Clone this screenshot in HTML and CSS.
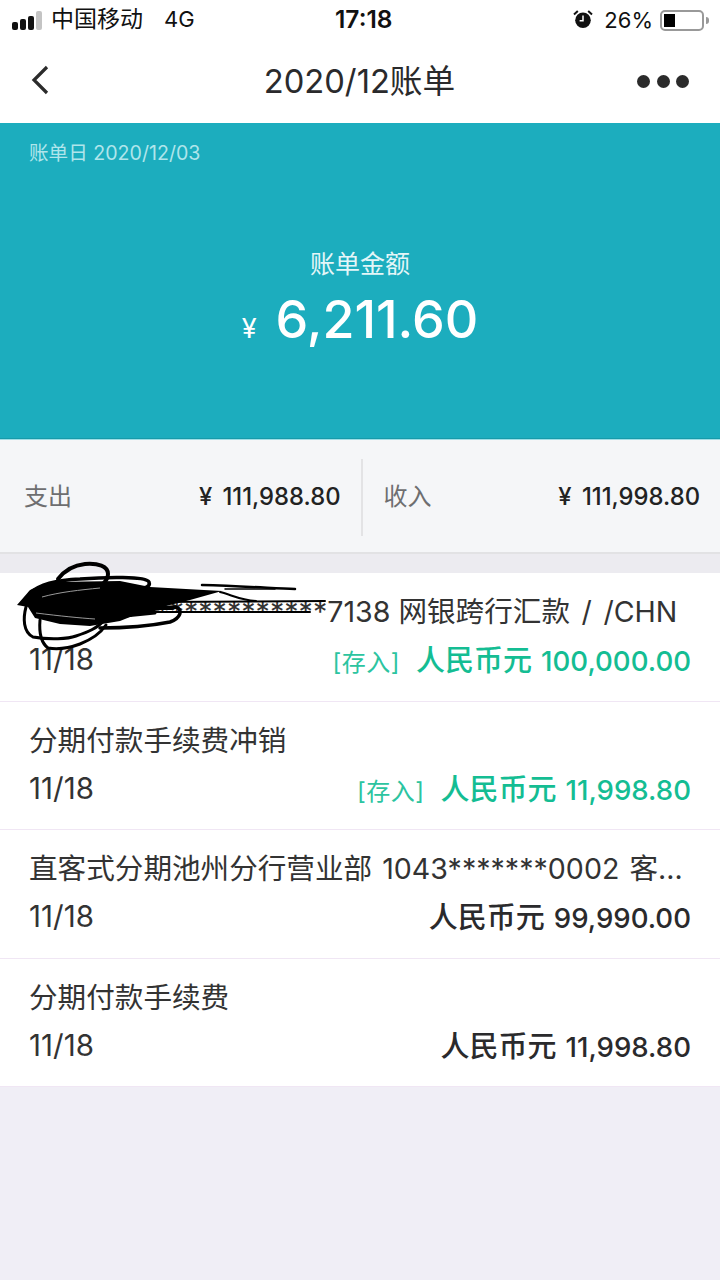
FILE: index.html
```html
<!DOCTYPE html>
<html lang="zh">
<head>
<meta charset="utf-8">
<title>2020/12账单</title>
<link rel="stylesheet" href="styles.css">
</head>
<body>
<div class="page">
  <header class="status">
    <div class="status-left">
      <div class="signal"><i></i><i></i><i></i><i class="off"></i></div>
      <span class="carrier">中国移动</span>
      <span class="net">4G</span>
    </div>
    <div class="clock">17:18</div>
    <div class="status-right">
      <svg class="alarm" width="20" height="20" viewBox="0 0 20 20"><circle cx="10" cy="11.2" r="7.8" fill="#111"/><path d="M10 6.5V11.7H6.6" fill="none" stroke="#fff" stroke-width="1.5"/><path d="M1 5.4L4.8 2M19 5.4L15.2 2" stroke="#111" stroke-width="2" fill="none"/></svg>
      <span class="pct">26%</span>
      <div class="battery"><div class="battery-fill"></div></div>
      <div class="battery-tip"></div>
    </div>
  </header>
  <nav class="nav">
    <svg class="back" width="20" height="30" viewBox="0 0 20 30"><path d="M17 2L4 15L17 28" fill="none" stroke="#2b2b2b" stroke-width="3.2"/></svg>
    <div class="nav-title">2020/12账单</div>
    <div class="dots"><i></i><i></i><i></i></div>
  </nav>
  <section class="hero">
    <div class="hero-date">账单日 2020/12/03</div>
    <div class="hero-label">账单金额</div>
    <div class="hero-amount"><span class="yen">¥</span><span class="sum">6,211.60</span></div>
  </section>
  <section class="summary">
    <div class="cell"><span class="cell-label">支出</span><span class="cell-val">¥ 111,988.80</span></div>
    <div class="cell cell-right"><span class="cell-label">收入</span><span class="cell-val">¥ 111,998.80</span></div>
  </section>
  <div class="gap"></div>
  <section class="list">
    <article class="row">
      <div class="row-title title-first">*************7138 网银跨行汇款<span class="slashes"> / /</span>CHN</div>
      <div class="row-sub"><span class="date">11/18</span><span class="amount in"><span class="tag">[存入]</span><span class="cny">人民币元</span> <span class="num">100,000.00</span></span></div>
    </article>
    <article class="row">
      <div class="row-title">分期付款手续费冲销</div>
      <div class="row-sub"><span class="date">11/18</span><span class="amount in"><span class="tag">[存入]</span><span class="cny">人民币元</span> <span class="num">11,998.80</span></span></div>
    </article>
    <article class="row">
      <div class="row-title title-long">直客式分期池州分行营业部 1043*******0002 客…</div>
      <div class="row-sub"><span class="date">11/18</span><span class="amount"><span class="cny">人民币元</span> <span class="num">99,990.00</span></span></div>
    </article>
    <article class="row">
      <div class="row-title">分期付款手续费</div>
      <div class="row-sub"><span class="date">11/18</span><span class="amount"><span class="cny">人民币元</span> <span class="num">11,998.80</span></span></div>
    </article>
    <svg class="scribble" width="340" height="100" viewBox="0 560 340 100">
      <path d="M17 605L30 590L50 582L120 581L150 587L222 591L190 600L166 606L140 613L120 621L90 626L60 624L35 618L28 607Z" fill="#000"/>
      <g fill="none" stroke="#000" stroke-linecap="round">
        <path d="M58 579C65 570 75 565 85 564C98 563 108 566 108 574C108 578 106 581 103 584" stroke-width="4"/>
        <path d="M30 593C40 584 55 580 80 579C105 577 146 576 149 582C151 587 145 588 135 589" stroke-width="3.5"/>
        <path d="M112 620C130 614 160 607 176 607C183 610 181 618 170 622C150 626 125 628 100 628" stroke-width="3.5"/>
        <path d="M26 607C23 618 23 632 33 637C50 640 68 639 76 636C88 632 98 628 104 620" stroke-width="3"/>
        <path d="M40 620C39 632 40 642 48 648C60 650 72 647 80 644C90 640 100 634 106 625" stroke-width="3"/>
        <path d="M115 608H172" stroke-width="4"/>
        <path d="M115 617L155 613" stroke-width="3"/>
        <path d="M150 602L325 601" stroke-width="2"/>
        <path d="M140 612H310" stroke-width="2"/>
        <path d="M202 585C240 586 270 588 295 589" stroke-width="2.5"/>
        <path d="M225 589H275" stroke-width="1.5"/>
        <path d="M220 592C232 595 240 600 256 601" stroke-width="2"/>
      </g>
      <g class="streaks" fill="none" stroke="#fff" stroke-width="1">
        <path d="M42 597C60 592 80 590 100 588"/>
        <path d="M36 613C60 616 80 618 95 619"/>
      </g>
    </svg>
  </section>
</div>
</body>
</html>
```
FILE: styles.css
```css
* { box-sizing: border-box; }
html, body { margin: 0; padding: 0; }
body { font-family: "Inter", "Noto Sans CJK SC", sans-serif; color: #2a2a2c; background: #f0eef6; }
.page { width: 720px; height: 1280px; overflow: hidden; display: flex; flex-direction: column; background: #f0eef6; }

.status { height: 40px; background: #fff; display: grid; grid-template-columns: 323px auto 1fr; align-items: center; padding: 0 11px 2px 12px; color: #111; }
.status-left { display: flex; align-items: center; }
.signal { display: flex; align-items: flex-end; gap: 2.5px; height: 19px; width: 31px; margin-top: 2px; }
.signal i { width: 5.5px; background: #111; border-radius: 2px; }
.signal i:nth-child(1) { height: 8px; }
.signal i:nth-child(2) { height: 11px; }
.signal i:nth-child(3) { height: 14px; }
.signal i:nth-child(4) { height: 19px; }
.signal .off { background: #c4c4c4; }
.carrier { font-size: 23px; margin-left: 8px; line-height: 1; }
.net { font-size: 22px; margin-left: 21px; }
.clock { font-size: 24.5px; font-weight: 600; }
.status-right { display: flex; align-items: center; justify-content: flex-end; margin-top: 2px; }
.alarm { margin-right: 11px; margin-top: -2px; }
.pct { font-size: 22px; margin-right: 7px; }
.battery { width: 44px; height: 21px; border: 2px solid #999; border-radius: 5px; padding: 2px; background: #fff; }
.battery-fill { width: 11px; height: 100%; background: #000; }
.battery-tip { width: 3px; height: 7px; background: #999; border-radius: 0 3px 3px 0; margin-left: 2px; }

.nav { height: 83px; background: #fff; display: grid; grid-template-columns: 1fr auto 1fr; align-items: center; padding: 0 31px 0 30px; }
.back { margin-top: -3px; }
.nav-title { font-size: 32.7px; padding-bottom: 6px; }
.dots { display: flex; gap: 6.5px; justify-self: end; }
.dots i { width: 13px; height: 13px; border-radius: 50%; background: #2b2b2b; }

.hero { height: 316px; background: #1cadbe; color: #fff; display: flex; flex-direction: column; align-items: center; border-bottom: 1px solid #179aaa; }
.hero-date { align-self: flex-start; margin: 18px 0 0 29px; font-size: 19.6px; line-height: 25px; color: #b0e5eb; }
.hero-label { margin-top: 81px; font-size: 25px; line-height: 34px; color: #e4f6f8; }
.hero-amount { display: flex; align-items: baseline; margin-top: 9px; }
.yen { font-size: 27px; margin-right: 19px; }
.sum { font-size: 52px; line-height: 60px; font-weight: 500; }

.summary { height: 115px; background: #f5f6f8; display: flex; align-items: center; padding-top: 2px; border-bottom: 2px solid #e2e2e4; border-top: 1px solid #9fdfe6; }
.cell { flex: 1; height: 77px; display: flex; align-items: center; justify-content: space-between; padding: 0 20px 0 24px; }
.cell-right { border-left: 2px solid #e3e3e5; padding-left: 21px; }
.cell-label { font-size: 24px; color: #6e6e70; padding-bottom: 5px; }
.cell-val { font-size: 23.8px; font-weight: 500; color: #222; word-spacing: 4px; padding-bottom: 1px; }

.gap { height: 19px; background: #ecebf0; }

.list { position: relative; background: #fff; }
.scribble { position: absolute; left: 0; top: -13px; }
.streaks { opacity: 0.6; }
.row { height: 128.5px; padding: 19px 29px 0 29px; border-bottom: 1px solid #f0e6f4; }
.row:last-child { border-bottom: 0; }
.row-title { font-size: 28.6px; line-height: 40px; white-space: nowrap; color: #333; }
.title-first { padding-left: 112px; }
.title-long { word-spacing: 2px; }
.slashes { word-spacing: 3.5px; }
.row-sub { display: flex; justify-content: space-between; align-items: center; margin-top: 7px; height: 40px; }
.date { font-size: 29.5px; color: #333; }
.amount { font-weight: 500; color: #2a2a2c; margin-top: -2px; display: flex; align-items: baseline; gap: 9px; }
.cny { font-size: 29px; }
.num { font-size: 27.6px; }
.in { color: #14bd93; }
.tag { font-size: 24px; font-weight: 400; margin-right: 7px; letter-spacing: 0.5px; color: #2cc4a0; }
```
